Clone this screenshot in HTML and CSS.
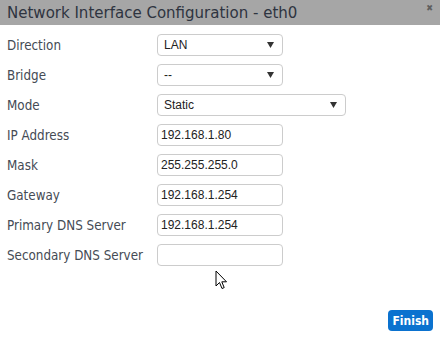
FILE: index.html
```html
<!DOCTYPE html>
<html lang="en">

<head>
    <meta charset="UTF-8">
    <title>Network Interface Configuration</title>
    <link rel="stylesheet" href="styles.css">
</head>

<body>
    <div class="dialog">
        <div class="title-bar">
            <span class="title">Network Interface Configuration - eth0</span>
            <span class="close">&#x2716;</span>
        </div>
        <form class="form">
            <div class="row">
                <label>Direction</label>
                <div class="select">
                    <span>LAN</span>
                    <svg class="arrow" width="7" height="6" viewBox="0 0 7 6"><path d="M0 0H7L3.5 6Z" fill="#333"/></svg>
                </div>
            </div>
            <div class="row">
                <label>Bridge</label>
                <div class="select">
                    <span>--</span>
                    <svg class="arrow" width="7" height="6" viewBox="0 0 7 6"><path d="M0 0H7L3.5 6Z" fill="#333"/></svg>
                </div>
            </div>
            <div class="row">
                <label>Mode</label>
                <div class="select wide">
                    <span>Static</span>
                    <svg class="arrow" width="7" height="6" viewBox="0 0 7 6"><path d="M0 0H7L3.5 6Z" fill="#333"/></svg>
                </div>
            </div>
            <div class="row">
                <label for="ip">IP Address</label>
                <input type="text" id="ip" value="192.168.1.80">
            </div>
            <div class="row">
                <label for="mask">Mask</label>
                <input type="text" id="mask" value="255.255.255.0">
            </div>
            <div class="row">
                <label for="gw">Gateway</label>
                <input type="text" id="gw" value="192.168.1.254">
            </div>
            <div class="row">
                <label for="dns1">Primary DNS Server</label>
                <input type="text" id="dns1" value="192.168.1.254">
            </div>
            <div class="row">
                <label for="dns2">Secondary DNS Server</label>
                <input type="text" id="dns2" value="">
            </div>
        </form>
        <div class="footer">
            <button type="button">Finish</button>
        </div>
    </div>
    <svg class="cursor" width="13" height="20" viewBox="0 0 13 20">
        <path d="M1 1V16L4.5 12.5L7 18.5L9.2 17.6L6.8 11.8H11.5Z" fill="#fff" stroke="#000" stroke-width="1" stroke-linejoin="round"/>
    </svg>
</body>

</html>
```

FILE: styles.css
```css
body {
    margin: 0;
    background: #fff;
    font-family: "DejaVu Sans Condensed", "DejaVu Sans", Verdana, sans-serif;
}

.dialog {
    width: 440px;
    height: 340px;
    position: relative;
}

.title-bar {
    height: 25px;
    background: #a6a6a6;
    display: flex;
    justify-content: space-between;
    align-items: flex-start;
    padding: 0 7px;
}

.title {
    font-size: 16.7px;
    line-height: 25px;
    color: #2e3440;
}

.close {
    font-size: 9px;
    color: #5f5f5f;
    margin-top: 3px;
}

.form {
    padding: 9px 0 0 7px;
}

.row {
    display: flex;
    align-items: center;
    height: 22px;
    margin-bottom: 8px;
}

label {
    width: 150px;
    font-size: 13.3px;
    color: #454b55;
}

.select,
input {
    box-sizing: border-box;
    width: 126px;
    height: 22px;
    border: 1px solid #ccc;
    border-radius: 4px;
    font-family: "Liberation Sans", Arial, sans-serif;
    font-size: 12px;
    color: #222;
}

.select {
    display: flex;
    justify-content: space-between;
    align-items: center;
    padding: 0 8px 0 6px;
}

.select.wide {
    width: 189px;
}

input {
    padding: 0 3px;
    margin: 0;
    outline: none;
}

.footer {
    position: absolute;
    right: 7px;
    bottom: 9px;
}

button {
    background: #0b72cf;
    color: #fff;
    border: none;
    border-radius: 4px;
    height: 21px;
    padding: 0 4px;
    font-family: "DejaVu Sans Condensed", "DejaVu Sans", Verdana, sans-serif;
    font-size: 12px;
    font-weight: bold;
    cursor: pointer;
}

.cursor {
    position: absolute;
    left: 215px;
    top: 270px;
}
```
